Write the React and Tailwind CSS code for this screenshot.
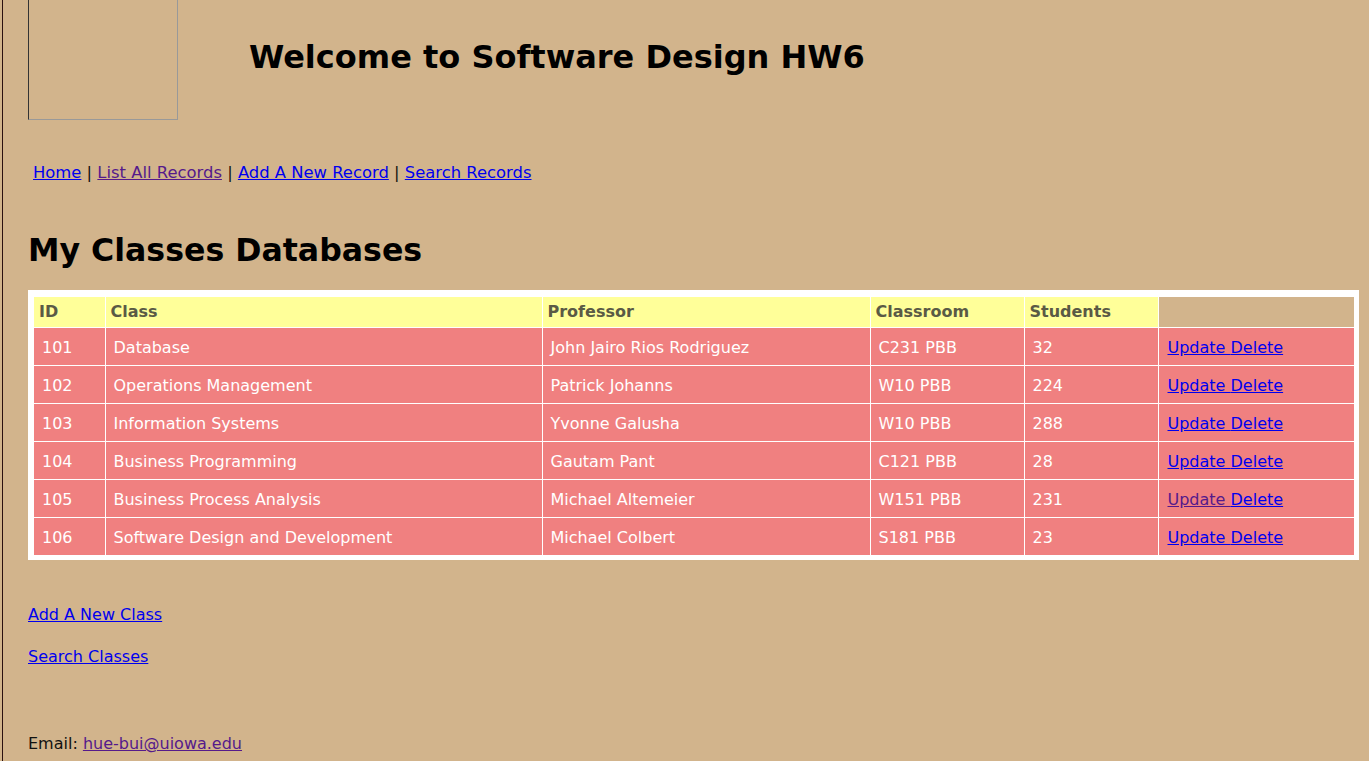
const rows = [
  { id: 101, name: 'Database', prof: 'John Jairo Rios Rodriguez', room: 'C231 PBB', n: 32 },
  { id: 102, name: 'Operations Management', prof: 'Patrick Johanns', room: 'W10 PBB', n: 224 },
  { id: 103, name: 'Information Systems', prof: 'Yvonne Galusha', room: 'W10 PBB', n: 288 },
  { id: 104, name: 'Business Programming', prof: 'Gautam Pant', room: 'C121 PBB', n: 28 },
  { id: 105, name: 'Business Process Analysis', prof: 'Michael Altemeier', room: 'W151 PBB', n: 231, visited: true },
  { id: 106, name: 'Software Design and Development', prof: 'Michael Colbert', room: 'S181 PBB', n: 23 },
];

const link = 'text-[#0000ee] underline';
const visited = 'text-[#551a8b] underline';

export default function App() {
  return (
    <div className="min-h-screen bg-[#d2b48c] font-['DejaVu_Sans',Verdana,sans-serif] text-black">
      <div className="ml-[2px] min-h-screen border-l border-[#2a1010] pl-[25px] pr-[10px]">
        {/* header */}
        <div className="flex items-center">
          <div className="h-[120px] w-[150px] border-l border-b border-r border-l-[#333] border-b-[#999] border-r-[#999]" />
          <h1 className="ml-[71px] -mt-[6px] text-[32px] font-bold">Welcome to Software Design HW6</h1>
        </div>

        {/* nav */}
        <div className="mt-[42px] pl-[5px] text-[16.4px] leading-[22px] text-[#111]">
          <a href="#" className={link}>Home</a> |{' '}
          <a href="#" className={visited}>List All Records</a> |{' '}
          <a href="#" className={link}>Add A New Record</a> |{' '}
          <a href="#" className={link}>Search Records</a>
        </div>

        <h2 className="mt-[46px] text-[31.6px] font-bold leading-[40px]">My Classes Databases</h2>

        {/* table */}
        <div className="mt-[20px] w-[1331px] border-[6px] border-t-[7px] border-white border-r-[5px] border-b-[5px]">
          <table className="w-full border-collapse text-[16px]">
            <thead>
              <tr className="h-[30px] text-left font-bold text-[#5a5a45]">
                <th className="w-[71px] bg-[#ffff99] pl-[5px]">ID</th>
                <th className="w-[437px] border-l border-white bg-[#ffff99] pl-[5px]">Class</th>
                <th className="w-[328px] border-l border-white bg-[#ffff99] pl-[5px]">Professor</th>
                <th className="w-[154px] border-l border-white bg-[#ffff99] pl-[5px]">Classroom</th>
                <th className="w-[134px] border-l border-white bg-[#ffff99] pl-[5px]">Students</th>
                <th className="border-l border-white" />
              </tr>
            </thead>
            <tbody>
              {rows.map((r) => (
                <tr key={r.id} className="h-[38px] border-t border-white bg-[#f08080] text-white">
                  <td className="pl-[8px] pt-[3px]">{r.id}</td>
                  <td className="border-l border-white pl-[8px] pt-[3px]">{r.name}</td>
                  <td className="border-l border-white pl-[8px] pt-[3px]">{r.prof}</td>
                  <td className="border-l border-white pl-[8px] pt-[3px]">{r.room}</td>
                  <td className="border-l border-white pl-[8px] pt-[3px]">{r.n}</td>
                  <td className="border-l border-white pl-[9px] pt-[3px]">
                    <a href="#" className={r.visited ? visited : link}>Update </a>
                    <a href="#" className={link}>Delete</a>
                  </td>
                </tr>
              ))}
            </tbody>
          </table>
        </div>

        {/* footer links */}
        <div className="mt-[44px] text-[16px] leading-[22px]">
          <a href="#" className={link}>Add A New Class</a>
        </div>
        <div className="mt-[20px] text-[16px] leading-[22px]">
          <a href="#" className={link}>Search Classes</a>
        </div>
        <div className="mt-[65px] text-[16px] leading-[22px] text-[#111]">
          Email: <a href="#" className={visited}>hue-bui@uiowa.edu</a>
        </div>
      </div>
    </div>
  );
}
